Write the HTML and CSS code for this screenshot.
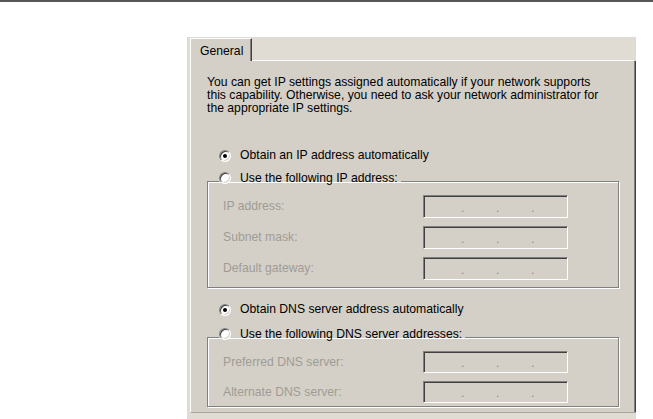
FILE: index.html
```html
<!DOCTYPE html>
<html>
<head>
<meta charset="utf-8">
<link rel="stylesheet" href="styles.css">
</head>
<body>
<div class="topbar"></div>
<div class="page">
  <div class="dialog">
    <div class="tabrow">
      <div class="tab">General</div>
      <div class="tabfill"></div>
    </div>
    <div class="pane">
      <p class="intro">You can get IP settings assigned automatically if your network supports<br>this capability. Otherwise, you need to ask your network administrator for<br>the appropriate IP settings.</p>

      <div class="radio-row row-ip"><span class="radio checked"></span><span>Obtain an IP address automatically</span></div>

      <fieldset class="group group-ip">
        <legend><span class="radio"></span>Use the following IP address:</legend>
        <div class="fields">
          <div class="field"><span class="label">IP address:</span><span class="ipbox"><span>.</span><span>.</span><span>.</span></span></div>
          <div class="field"><span class="label">Subnet mask:</span><span class="ipbox"><span>.</span><span>.</span><span>.</span></span></div>
          <div class="field"><span class="label">Default gateway:</span><span class="ipbox"><span>.</span><span>.</span><span>.</span></span></div>
        </div>
      </fieldset>

      <div class="radio-row row-dns"><span class="radio checked"></span><span>Obtain DNS server address automatically</span></div>

      <fieldset class="group group-dns">
        <legend><span class="radio"></span>Use the following DNS server addresses:</legend>
        <div class="fields">
          <div class="field"><span class="label">Preferred DNS server:</span><span class="ipbox small"><span>.</span><span>.</span><span>.</span></span></div>
          <div class="field"><span class="label">Alternate DNS server:</span><span class="ipbox small"><span>.</span><span>.</span><span>.</span></span></div>
        </div>
      </fieldset>
    </div>
  </div>
</div>
</body>
</html>
```

FILE: styles.css
```css
html, body {
  margin: 0;
  padding: 0;
  background: #ffffff;
  overflow: hidden;
  font-family: "Liberation Sans", Arial, sans-serif;
  font-size: 12.2px;
  line-height: 13px;
  color: #000;
}

.topbar {
  height: 2px;
  background: #575757;
}

.page {
  padding: 35px 0 0 187px;
}

.dialog {
  width: 446px;
  height: 400px;
  padding: 1px 0 0 3px;
  background: #e0dcd4;
  display: flex;
  flex-direction: column;
}

.tabrow {
  display: flex;
  height: 23px;
}

.tab {
  box-sizing: border-box;
  width: 62px;
  height: 23px;
  background: #d4d0c8;
  border-left: 1px solid #ffffff;
  border-top: 1px solid #ffffff;
  border-right: 1px solid #404040;
  box-shadow: inset -1px 0 0 #808080;
  padding: 6px 0 0 9px;
}

.tabfill {
  flex: 1;
  border-bottom: 1px solid #ffffff;
  margin-right: 2px;
}

.pane {
  background: #d4d0c8;
  border-left: 1px solid #ffffff;
  border-bottom: 1px solid #a8a49c;
  box-shadow: inset -1px 0 0 #404040, inset -2px 0 0 #808080;
  padding: 15px 17px 5px 16px;
  display: flex;
  flex-direction: column;
}

.intro {
  margin: 0;
  white-space: nowrap;
}

.radio-row {
  display: flex;
  align-items: center;
  height: 13px;
  margin-left: 12px;
}

.row-ip {
  margin-top: 34px;
}

.row-dns {
  margin-top: 15px;
}

.radio {
  box-sizing: border-box;
  width: 12px;
  height: 12px;
  border-radius: 50%;
  background: #ffffff;
  border: 1px solid;
  border-color: #808080 #ffffff #ffffff #808080;
  box-shadow: inset 1px 1px 0 #404040, inset -1px -1px 0 #d4d0c8;
  margin-right: 9px;
  flex: none;
  display: inline-flex;
  align-items: center;
  justify-content: center;
  vertical-align: -2px;
}

.radio.checked::after {
  content: "";
  width: 4px;
  height: 4px;
  border-radius: 50%;
  background: #000;
}

.group {
  margin: 10px 0 0 0;
  padding: 4px 0 7px 15px;
  border: 1px solid #808080;
  box-shadow: inset 1px 1px 0 #ffffff, 1px 1px 0 #ffffff;
  min-width: 0;
}

.group-dns {
  margin-top: 12px;
  padding-bottom: 3px;
}

.group legend {
  padding: 0 3px 6px 0;
  margin-left: -4px;
  line-height: 13px;
  height: 13px;
  white-space: nowrap;
}

.fields {
  display: flex;
  flex-direction: column;
  gap: 8px;
}

.field {
  display: flex;
  align-items: center;
}

.label {
  width: 200px;
  color: #a09c95;
}

.ipbox {
  box-sizing: border-box;
  width: 145px;
  height: 23px;
  background: #d4d0c8;
  border: 1px solid;
  border-color: #808080 #ffffff #ffffff #808080;
  box-shadow: inset 1px 1px 0 #404040;
  display: flex;
  align-items: center;
  padding: 3px 0 0 37px;
  color: #8c8c8c;
}

.ipbox.small {
  height: 22px;
}

.ipbox span {
  width: 35px;
  flex: none;
}
```
